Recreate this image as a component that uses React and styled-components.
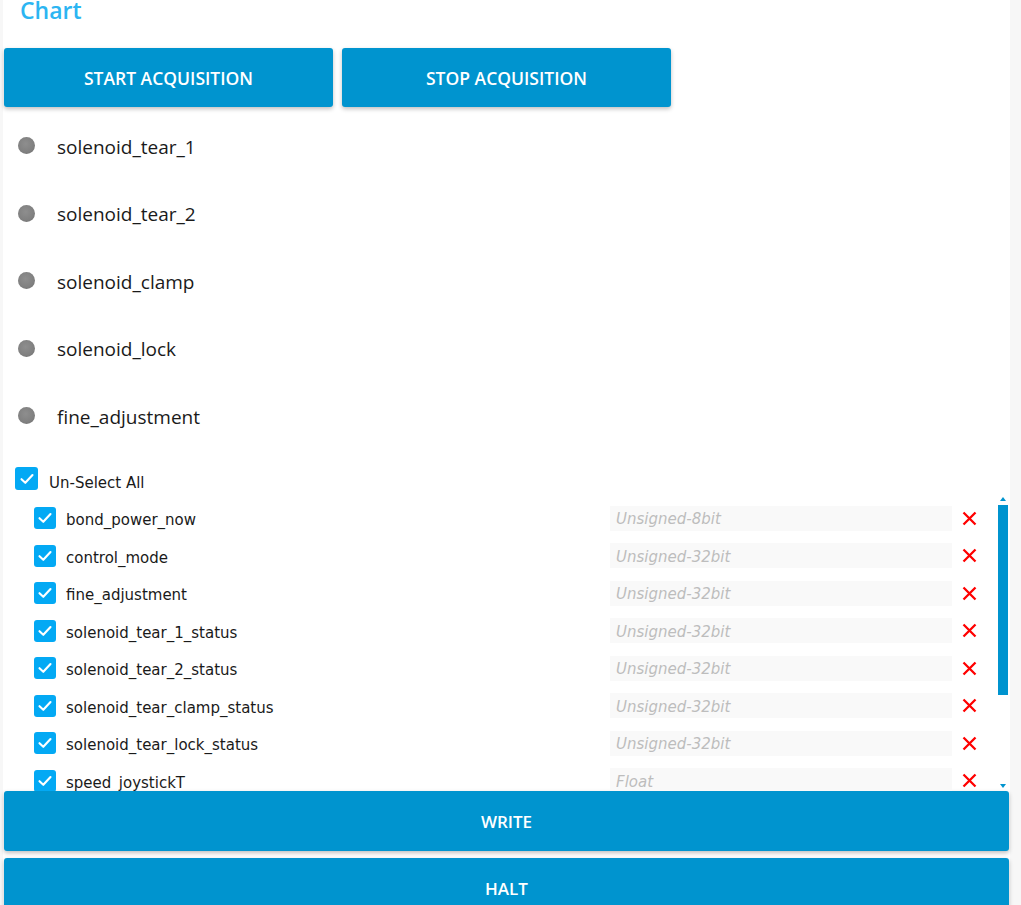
import React from "react";
import styled, { createGlobalStyle } from "styled-components";

const GlobalStyle = createGlobalStyle`
  html, body {
    margin: 0;
    padding: 0;
    background: #f7f7f7;
  }
  * {
    box-sizing: border-box;
  }
`;

const statuses = [
  "solenoid_tear_1",
  "solenoid_tear_2",
  "solenoid_clamp",
  "solenoid_lock",
  "fine_adjustment",
];

const variables = [
  { name: "bond_power_now", type: "Unsigned-8bit" },
  { name: "control_mode", type: "Unsigned-32bit" },
  { name: "fine_adjustment", type: "Unsigned-32bit" },
  { name: "solenoid_tear_1_status", type: "Unsigned-32bit" },
  { name: "solenoid_tear_2_status", type: "Unsigned-32bit" },
  { name: "solenoid_tear_clamp_status", type: "Unsigned-32bit" },
  { name: "solenoid_tear_lock_status", type: "Unsigned-32bit" },
  { name: "speed_joystickT", type: "Float" },
  { name: "speed_joystickX", type: "Float" },
  { name: "speed_joystickY", type: "Float" },
  { name: "weld_time", type: "Unsigned-32bit" },
];

// visible part of the list vs. its full height, for the scrollbar thumb
const thumbShare = 0.69;

const Check = () => (
  <svg width="16" height="16" viewBox="0 0 16 16">
    <path
      d="M2.5 8.2 L6.3 11.8 L13.5 4"
      fill="none"
      stroke="#fff"
      strokeWidth="2.1"
      strokeLinecap="round"
      strokeLinejoin="round"
    />
  </svg>
);

const Cross = () => (
  <svg width="15" height="15" viewBox="0 0 15 15">
    <path
      d="M1.5 1.5 L13.5 13.5 M13.5 1.5 L1.5 13.5"
      stroke="#ff0000"
      strokeWidth="2.3"
    />
  </svg>
);

const Arrow = ({ down }) => (
  <svg width="6" height="4" viewBox="0 0 6 4">
    <path d={down ? "M0 0 L3 4 L6 0 Z" : "M0 4 L3 0 L6 4 Z"} fill="#0094cf" />
  </svg>
);

const App = () => {
  return (
    <>
      <GlobalStyle />
      <Card>
        <Title>Chart</Title>
        <ButtonRow>
          <AcqButton>START ACQUISITION</AcqButton>
          <AcqButton>STOP ACQUISITION</AcqButton>
        </ButtonRow>
        <StatusList>
          {statuses.map((s) => (
            <StatusRow key={s}>
              <Dot />
              <StatusLabel>{s}</StatusLabel>
            </StatusRow>
          ))}
        </StatusList>
        <SelectAll>
          <CheckBox $size={23}>
            <Check />
          </CheckBox>
          <SelectLabel>Un-Select All</SelectLabel>
        </SelectAll>
        <ScrollFrame>
          <ScrollArea>
            {variables.map((v) => (
              <VarRow key={v.name}>
                <CheckBox $size={22}>
                  <Check />
                </CheckBox>
                <VarLabel>{v.name}</VarLabel>
                <TypeInput placeholder={v.type} />
                <RemoveButton>
                  <Cross />
                </RemoveButton>
              </VarRow>
            ))}
          </ScrollArea>
          <ScrollBar>
            <ScrollArrow>
              <Arrow />
            </ScrollArrow>
            <Track>
              <Thumb style={{ height: `${thumbShare * 100}%` }} />
            </Track>
            <ScrollArrow>
              <Arrow down />
            </ScrollArrow>
          </ScrollBar>
        </ScrollFrame>
        <ActionButton>WRITE</ActionButton>
        <ActionButton>HALT</ActionButton>
      </Card>
    </>
  );
};

export default App;

const Card = styled.div`
  margin-left: 3px;
  width: 1007px;
  min-height: 960px;
  background: #ffffff;
  padding: 0 1px;
`;

const Title = styled.h2`
  margin: -2px 0 26px;
  padding-left: 16px;
  font-family: "Open Sans", sans-serif;
  font-weight: 600;
  font-size: 23px;
  line-height: 24px;
  color: #2cb5f2;
`;

const ButtonRow = styled.div`
  display: flex;
  gap: 9px;
`;

const BaseButton = styled.button`
  border: none;
  border-radius: 3px;
  background: #0094cf;
  color: #ffffff;
  font-family: "Open Sans", sans-serif;
  font-weight: 600;
  font-size: 17.5px;
  padding-top: 2px;
  box-shadow: 0 2px 4px rgba(0, 0, 0, 0.25);
  cursor: pointer;
`;

const AcqButton = styled(BaseButton)`
  width: 329px;
  height: 59px;
`;

const ActionButton = styled(BaseButton)`
  display: block;
  width: 100%;
  height: 60px;
  margin-bottom: 7px;
  font-size: 17px;
`;

const StatusList = styled.div`
  padding-top: 5px;
`;

const StatusRow = styled.div`
  display: flex;
  align-items: center;
  height: 67.5px;
  padding-left: 14px;
`;

const Dot = styled.span`
  width: 17px;
  height: 17px;
  border-radius: 50%;
  background: radial-gradient(circle at 45% 40%, #8e8e8e 0%, #808080 60%, #6a6a6a 100%);
  margin-right: 22px;
`;

const StatusLabel = styled.span`
  padding-top: 2px;
  font-family: "Open Sans", sans-serif;
  font-size: 19px;
  color: #1a1a1a;
`;

const SelectAll = styled.div`
  display: flex;
  align-items: center;
  height: 24px;
  margin-top: 17px;
  margin-bottom: 3px;
  padding-left: 11px;
`;

const CheckBox = styled.span`
  display: flex;
  align-items: center;
  justify-content: center;
  flex: none;
  width: ${(p) => p.$size}px;
  height: ${(p) => p.$size}px;
  border-radius: 3px;
  background: #03a9f4;
`;

const SelectLabel = styled.span`
  margin-left: 11px;
  padding-top: 8px;
  font-family: "DejaVu Sans", Verdana, sans-serif;
  font-size: 15px;
  color: #1a1a1a;
`;

const ScrollFrame = styled.div`
  display: flex;
  height: 297px;
  padding-right: 1px;
`;

const ScrollArea = styled.div`
  flex: 1;
  overflow-y: auto;
  scrollbar-width: none;
  padding: 6px 21px 10px 30px;
`;

const ScrollBar = styled.div`
  display: flex;
  flex-direction: column;
  width: 10px;
`;

const ScrollArrow = styled.div`
  display: flex;
  align-items: center;
  justify-content: center;
  height: 10px;
`;

const Track = styled.div`
  flex: 1;
  padding-top: 1px;
`;

const Thumb = styled.div`
  background: #0094cf;
`;

const VarRow = styled.div`
  display: grid;
  grid-template-columns: 22px 1fr 342px 15px;
  column-gap: 10px;
  align-items: center;
  height: 37.5px;
`;

const VarLabel = styled.span`
  padding-top: 4px;
  font-family: "DejaVu Sans", Verdana, sans-serif;
  font-size: 15px;
  color: #1a1a1a;
`;

const TypeInput = styled.input`
  height: 25px;
  border: none;
  outline: none;
  background: #f9f9f9;
  padding: 2px 6px 0;
  font-family: "DejaVu Sans", Verdana, sans-serif;
  font-style: italic;
  font-size: 15px;

  &::placeholder {
    color: #bdbdbd;
  }
`;

const RemoveButton = styled.span`
  display: flex;
  align-items: center;
  justify-content: center;
  width: 15px;
  height: 15px;
`;
